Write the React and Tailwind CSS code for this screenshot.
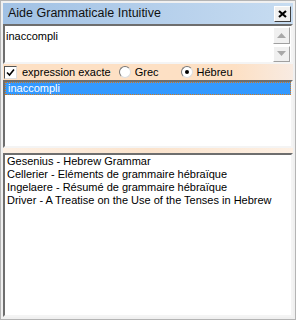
import React from 'react';

const books = [
  'Gesenius - Hebrew Grammar',
  'Cellerier - Eléments de grammaire hébraïque',
  'Ingelaere - Résumé de grammaire hébraïque',
  'Driver - A Treatise on the Use of the Tenses in Hebrew',
];

const sunken =
  'border-2 border-t-[#6e6e6e] border-l-[#6e6e6e] border-r-[#f4f4f4] border-b-[#f4f4f4] bg-white';

const ScrollButton = ({ up }) => (
  <div className="w-[17px] h-[17px] bg-[#f0f0f0] border border-t-white border-l-white border-r-[#a0a0a0] border-b-[#a0a0a0] flex items-center justify-center">
    <svg width="9" height="5" viewBox="0 0 9 5">
      {up ? (
        <polygon points="0,5 9,5 4.5,0" fill="#a8a8a8" />
      ) : (
        <polygon points="0,0 9,0 4.5,5" fill="#a8a8a8" />
      )}
    </svg>
  </div>
);

const App = () => {
  return (
    <div className="w-[296px] h-[320px] bg-[#f0f0f0] border border-[#b4b4b4] p-[2px] flex flex-col font-['Liberation_Sans',Arial,sans-serif] text-[11px] text-black overflow-hidden">
      {/* Title bar */}
      <div className="h-[21px] shrink-0 flex items-center justify-between pl-[5px] pr-[2px] bg-gradient-to-r from-[#a1c1e4] to-[#c7dcf1]">
        <span className="text-[12.5px] text-[#111]">Aide Grammaticale Intuitive</span>
        <div className="w-[17px] h-[16px] bg-[#f0f0f0] border border-t-white border-l-white border-r-[#404040] border-b-[#404040] flex items-center justify-center">
          <svg width="9" height="8" viewBox="0 0 9 8">
            <path d="M1 1 L8 7 M8 1 L1 7" stroke="black" strokeWidth="2.2" />
          </svg>
        </div>
      </div>

      {/* Search box */}
      <div className={`h-[40px] shrink-0 flex ${sunken}`}>
        <div className="flex-1 pl-[1px] pt-[2px]">inaccompli</div>
        <div className="flex flex-col gap-[2px] pt-[1px] pr-[1px]">
          <ScrollButton up />
          <ScrollButton />
        </div>
      </div>

      {/* Options */}
      <div className="h-[16px] shrink-0 flex items-center bg-gradient-to-r from-[#fde0c4] via-[#fde0c4] via-80% to-[#f8ebe2]">
        <div className="w-[13px] h-[13px] bg-white border border-t-[#555] border-l-[#555] border-r-[#ddd] border-b-[#ddd] flex items-center justify-center ml-[1px]">
          <svg width="9" height="9" viewBox="0 0 9 9">
            <path d="M1 4.5 L3.5 7 L8 1.5" stroke="black" strokeWidth="1.6" fill="none" />
          </svg>
        </div>
        <span className="ml-[5px]">expression exacte</span>
        <div className="ml-[8px] w-[12px] h-[12px] rounded-full bg-white border border-t-[#777] border-l-[#777] border-r-[#ddd] border-b-[#ddd]" />
        <span className="ml-[4px]">Grec</span>
        <div className="ml-[22px] w-[12px] h-[12px] rounded-full bg-white border border-t-[#777] border-l-[#777] border-r-[#ddd] border-b-[#ddd] flex items-center justify-center">
          <div className="w-[4px] h-[4px] rounded-full bg-black" />
        </div>
        <span className="ml-[4px]">Hébreu</span>
      </div>

      {/* Results list */}
      <div className={`h-[68px] shrink-0 ${sunken}`}>
        <div className="h-[13px] bg-[#3399ff] border border-dotted border-[#d07a20] text-white leading-[11px] pl-[2px]">
          inaccompli
        </div>
      </div>

      {/* Separator */}
      <div className="h-[5px] shrink-0 bg-gradient-to-r from-[#fdf0e4] via-[#fbe3cc] to-[#fdf0e4]" />

      {/* Books list */}
      <div className={`flex-1 pl-[2px] ${sunken}`}>
        {books.map((b) => (
          <div key={b} className="h-[13px] leading-[13px] whitespace-nowrap">
            {b}
          </div>
        ))}
      </div>
    </div>
  );
};

export default App;
